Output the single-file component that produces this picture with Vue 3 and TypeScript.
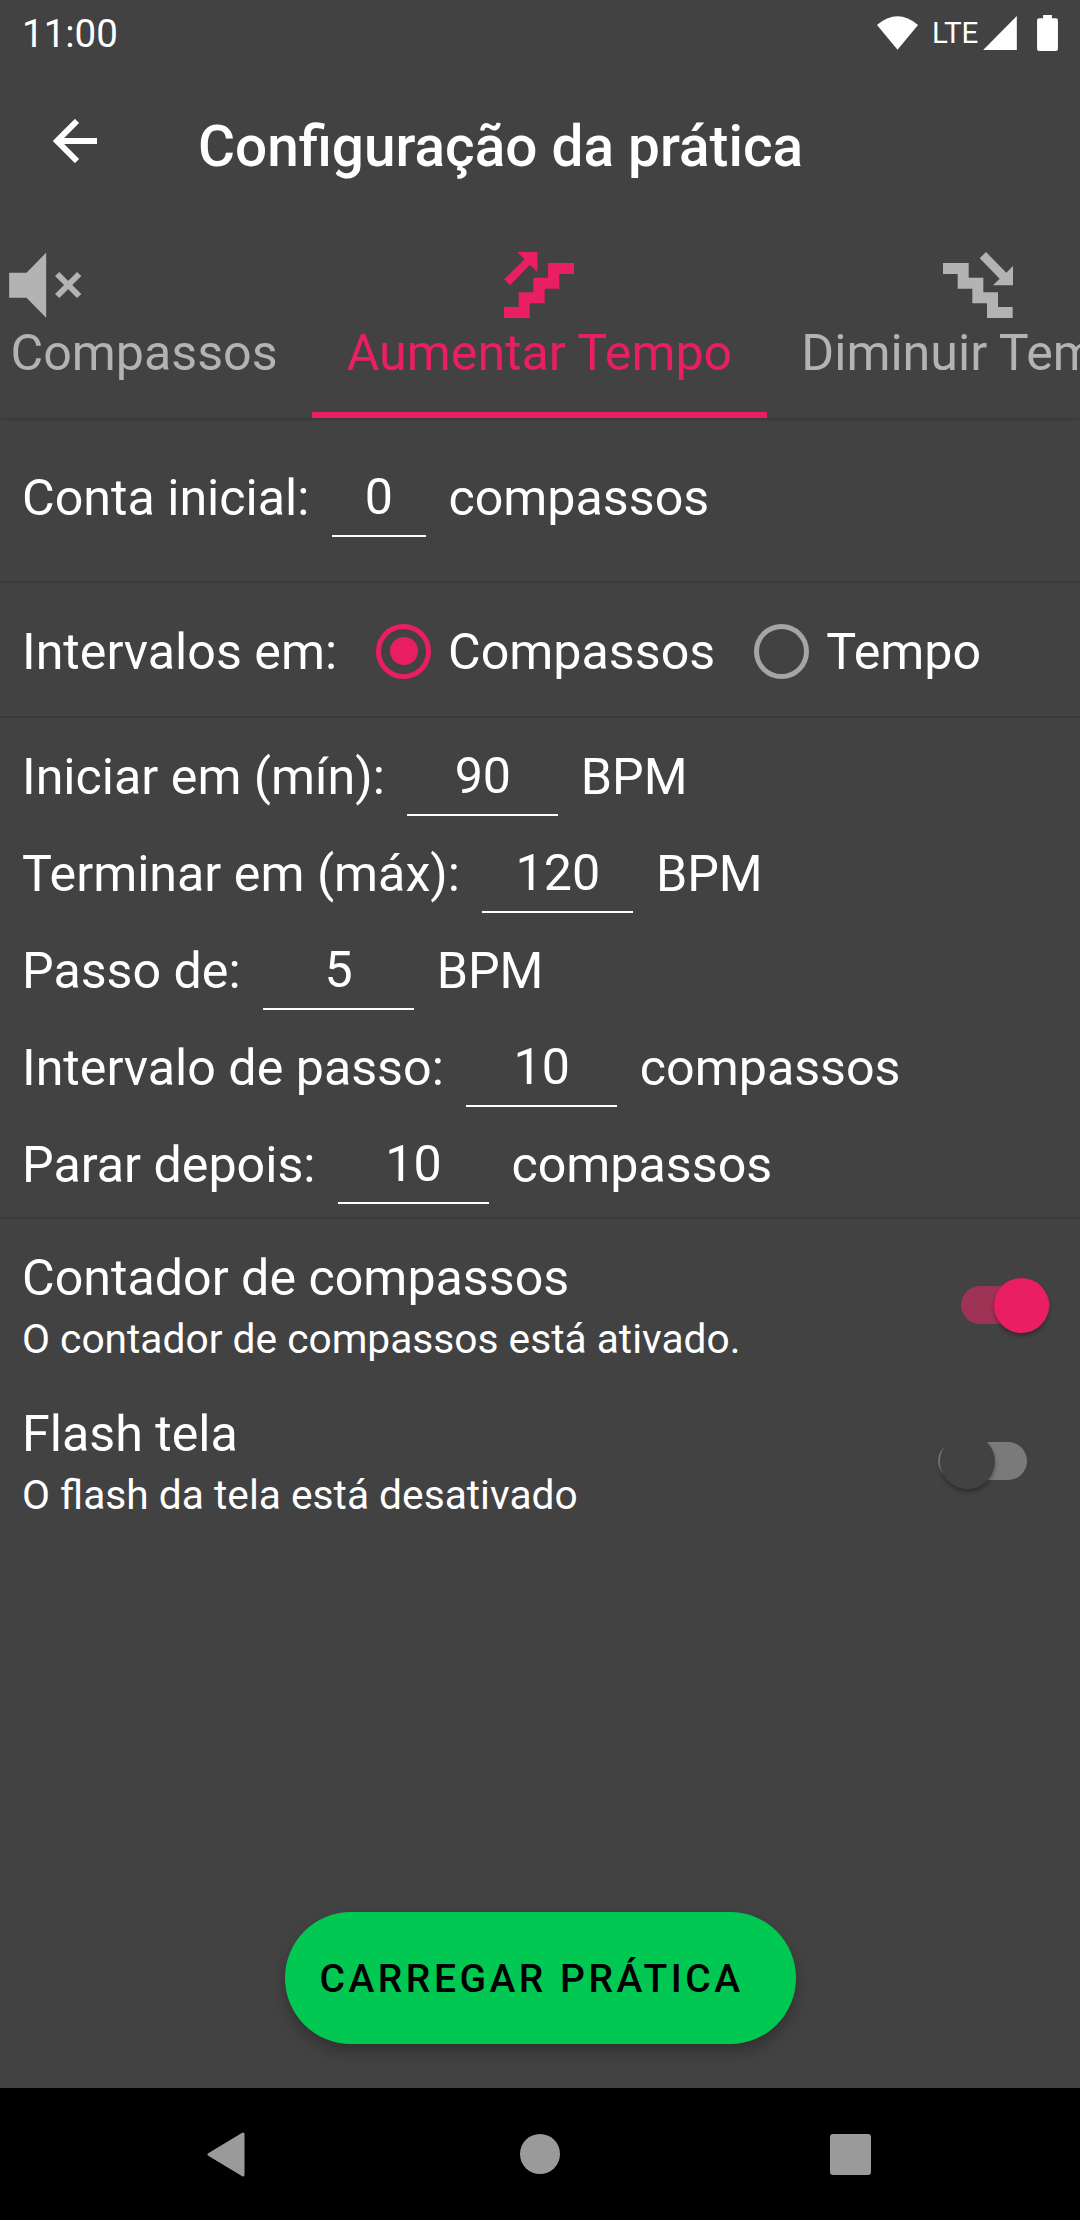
<script setup lang="ts">
interface Field { label: string; value: string; unit: string }
const fields: Field[] = [
  { label: 'Iniciar em (mín):', value: '90', unit: 'BPM' },
  { label: 'Terminar em (máx):', value: '120', unit: 'BPM' },
  { label: 'Passo de:', value: '5', unit: 'BPM' },
  { label: 'Intervalo de passo:', value: '10', unit: 'compassos' },
  { label: 'Parar depois:', value: '10', unit: 'compassos' },
]
</script>

<template>
  <div class="screen">
    <div class="status">
      <span class="time">11:00</span>
      <div class="status-icons">
        <svg class="wifi" width="41" height="34" viewBox="20 17 124 101"><path d="M20 43Q82-9 144 43L82 118z" fill="#fff"/></svg>
        <span class="lte">LTE</span>
        <svg class="signal" width="34" height="34" viewBox="340 17 100 101"><path d="M440 17v101H340z" fill="#fff"/></svg>
        <svg class="battery" width="21" height="36" viewBox="502 15 62 107"><path d="M520 15h26v10h12a6 6 0 0 1 6 6v85a6 6 0 0 1-6 6h-50a6 6 0 0 1-6-6V31a6 6 0 0 1 6-6h12z" fill="#fff"/></svg>
      </div>
    </div>
    <div class="toolbar">
      <svg class="back" width="44" height="44" viewBox="0 0 44 44"><path d="M44 22H5M24 2 4 22l20 20" fill="none" stroke="#fff" stroke-width="6"/></svg>
      <span class="title">Configuração da prática</span>
    </div>
    <div class="tabs">
      <div class="tab first">
        <svg width="73" height="66" viewBox="25 36 218 198"><path d="M25 98h52l59-60v195l-59-60H25z" fill="#b3b3b3"/><path d="M169 102l66 66M235 102l-66 66" stroke="#b3b3b3" stroke-width="18" fill="none"/></svg>
        <span>Compassos</span>
      </div>
      <div class="tab active">
        <svg width="70" height="66" viewBox="46 36 210 198"><path d="M46 234v-33h44v-44h44v-44h44V69h78v33h-44v44h-44v44h-45v44z" fill="#e91e63"/><path d="M86 36h60v60l-22-22-60 62-18-18 62-60z" fill="#e91e63"/></svg>
        <span>Aumentar Tempo</span>
      </div>
      <div class="tab last">
        <svg width="70" height="66" viewBox="36 36 210 198"><path d="M36 69h77v44h44v44h44v44h44v33h-77v-44h-44v-44H80v-44H36z" fill="#b3b3b3"/><path d="M165 36l61 62 20-20v58h-60l20-20-60-61z" fill="#b3b3b3"/></svg>
        <span>Diminuir Tempo</span>
      </div>
    </div>

    <div class="row conta">
      <span>Conta inicial:</span>
      <span class="input small">0</span>
      <span>compassos</span>
    </div>
    <div class="row intervalos">
      <span>Intervalos em:</span>
      <span class="radio on"><i></i></span>
      <span class="radio-label">Compassos</span>
      <span class="radio"></span>
      <span class="radio-label">Tempo</span>
    </div>
    <div class="fields">
      <div v-for="f in fields" :key="f.label" class="field">
        <span>{{ f.label }}</span>
        <span class="input">{{ f.value }}</span>
        <span>{{ f.unit }}</span>
      </div>
    </div>
    <div class="settings">
      <div class="setting">
        <div>
          <div class="s-title">Contador de compassos</div>
          <div class="s-sub">O contador de compassos está ativado.</div>
        </div>
        <div class="switch on"><b></b></div>
      </div>
      <div class="setting">
        <div>
          <div class="s-title">Flash tela</div>
          <div class="s-sub">O flash da tela está desativado</div>
        </div>
        <div class="switch off"><b></b></div>
      </div>
    </div>
    <div class="spacer">
      <button class="load">CARREGAR PRÁTICA</button>
    </div>
    <div class="nav">
      <svg class="tri" width="38" height="45" viewBox="0 0 38 45"><path d="M36 2v41L2 22.500z" fill="#9a9a9a" stroke="#9a9a9a" stroke-width="3" stroke-linejoin="round"/></svg>
      <span class="dot"></span>
      <span class="square"></span>
    </div>
  </div>
</template>

<style scoped>
.screen { width: 1080px; height: 2220px; background: #424242; color: #fff; font-family: Roboto, "Liberation Sans", sans-serif; display: flex; flex-direction: column; overflow: hidden; font-size: 50.2px; }
.status { height: 63px; flex: none; display: flex; justify-content: space-between; align-items: center; padding: 3px 22px 0; box-sizing: border-box; }
.time { font-size: 38.5px; }
.status-icons { display: flex; align-items: center; }
.lte { font-size: 29.5px; margin-left: 14px; width: 44px; }
.signal { margin-left: 7px; }
.battery { margin-left: 20px; }
.toolbar { height: 122px; flex: none; box-sizing: border-box; padding: 40px 0 0 53px; display: flex; align-items: center; }
.back { margin-top: -6px; }
.title { font-size: 56.7px; font-weight: 500; margin: 4px 0 0 101px; white-space: nowrap; }
.tabs { height: 233px; flex: none; display: flex; box-shadow: 0 2px 2px rgba(0,0,0,.12); overflow: hidden; }
.tab { flex: none; box-sizing: border-box; padding: 67px 34.5px 0; height: 233px; display: flex; flex-direction: column; align-items: center; color: #b3b3b3; white-space: nowrap; }
.tab span { margin-top: 5px; }
.tab.first { margin-left: -24px; }
.tab.first svg { align-self: flex-start; margin-left: -2px; }
.tab.last svg { align-self: flex-start; margin-left: 142px; }
.tab.active { color: #e91e63; border-bottom: 6px solid #e91e63; }
.row { display: flex; align-items: center; padding-left: 22px; box-sizing: border-box; border-bottom: 2px solid #3a3a3a; flex: none; }
.conta { height: 165px; padding-bottom: 4px; }
.intervalos { height: 135px; padding-top: 3px; }
.input { width: 151px; margin: 0 22.5px; text-align: center; border-bottom: 2px solid #fff; line-height: 76px; box-sizing: border-box; height: 78px; }
.input.small { width: 94px; }
.radio { width: 55px; height: 55px; border-radius: 50%; border: 5px solid #a5a5a5; box-sizing: border-box; display: flex; align-items: center; justify-content: center; margin-left: 39px; }
.radio.on { border-color: #e91e63; }
.radio i { width: 28px; height: 28px; border-radius: 50%; background: #e91e63; }
.radio-label { margin-left: 17px; }
.fields { height: 501px; flex: none; padding: 10px 22px 0; box-sizing: border-box; border-bottom: 2px solid #3a3a3a; display: flex; flex-direction: column; }
.field { display: flex; align-items: center; height: 97px; flex: none; }
.settings { padding: 29px 22px 0; display: flex; flex-direction: column; gap: 34px; flex: none; }
.setting { display: flex; justify-content: space-between; align-items: center; }
.s-title { line-height: 60px; }
.s-sub { font-size: 40.7px; line-height: 62px; }
.switch { width: 89px; height: 38px; border-radius: 19px; position: relative; margin-top: -8px; }
.switch b { position: absolute; width: 55px; height: 55px; border-radius: 50%; top: -8px; box-shadow: 0 3px 4px rgba(0,0,0,.3); }
.switch.on { background: #9e3355; margin-right: 8px; }
.switch.on b { right: 1px; background: #e91e63; }
.switch.off { background: #7a7a7a; margin-right: 31px; }
.switch.off b { left: 2px; background: #424242; }
.spacer { flex: 1; display: flex; align-items: flex-end; justify-content: center; padding-bottom: 44px; }
.load { width: 511px; height: 132px; border-radius: 66px; border: 0; background: #00c853; color: #000; font: 500 39px Roboto, sans-serif; letter-spacing: 3.5px; text-align: left; padding: 2px 0 0 35px; box-shadow: 0 8px 14px rgba(0,0,0,.25); white-space: nowrap; }
.nav { height: 132px; flex: none; background: #000; display: flex; align-items: center; justify-content: center; position: relative; }
.tri { position: absolute; left: 207px; top: 44px; }
.dot { width: 40px; height: 40px; background: #9a9a9a; border-radius: 50%; }
.square { position: absolute; left: 830px; top: 46px; width: 41px; height: 41px; background: #9a9a9a; border-radius: 3px; }
</style>

<style>
html, body { margin: 0; background: #424242; }
</style>
